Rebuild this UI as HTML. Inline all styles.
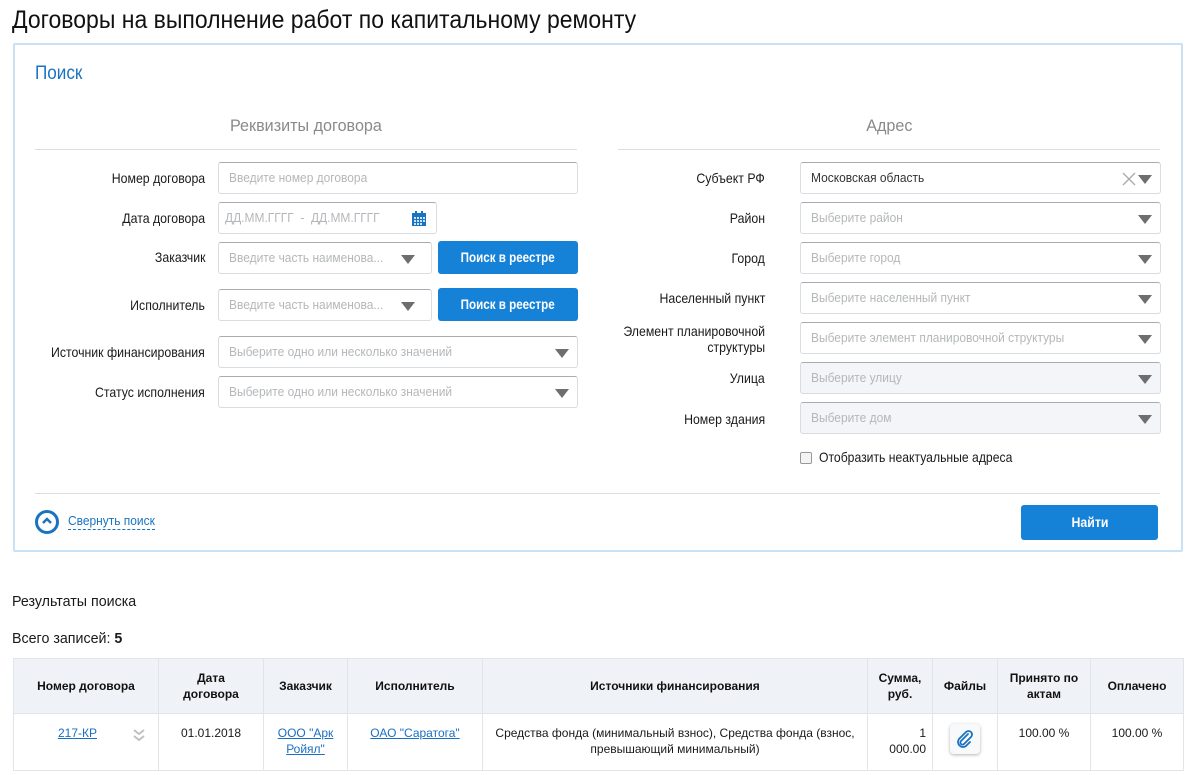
<!DOCTYPE html>
<html><head><meta charset="utf-8"><style>
*{box-sizing:border-box;margin:0;padding:0}
body{width:1192px;height:775px;overflow:hidden;background:#fff;font-family:"Liberation Sans",sans-serif;color:#1a1a1a;position:relative}
.a{position:absolute}
.s{display:inline-block;white-space:nowrap}
.lbl{position:absolute;font-size:14px;text-align:right;line-height:16px;transform:scaleX(.88);transform-origin:right center;white-space:nowrap}
.inp{position:absolute;height:32px;border:1px solid #d8dde2;border-top-color:#a9adb1;border-radius:3px;background:#fff;font-size:13px;color:#b4b7ba;padding-left:10px;line-height:30px;white-space:nowrap;overflow:hidden}
.inp .s{transform:scaleX(.92);transform-origin:left center}
.inp.dis{background:#f3f5f9}
.arr{position:absolute;right:8px;top:12px;width:0;height:0;border-left:7px solid transparent;border-right:7px solid transparent;border-top:9px solid #6c6e70}
.btn{position:absolute;background:#1582d8;color:#fff;border-radius:3px;font-size:14px;font-weight:bold;text-align:center}
table{position:absolute;left:13px;top:658px;border-collapse:collapse;font-family:"Liberation Sans",sans-serif;font-size:12px}
td,th{border:1px solid #e1e5ea;text-align:center;vertical-align:middle;padding:0 6px;line-height:16px}
th{background:#eff3f7;height:55px;font-weight:bold;color:#111}
td{vertical-align:top;padding-top:11px;height:57px}
a{color:#1a6fc0}
</style></head><body>
<div class="a" style="left:12px;top:5px;font-size:25px;line-height:30px;color:#111;transform:scaleX(.92);transform-origin:left center;white-space:nowrap">Договоры на выполнение работ по капитальному ремонту</div>
<div class="a" style="left:13px;top:43px;width:1170px;height:509px;border:2px solid #c8e1f5;border-radius:2px"></div>
<div class="a" style="left:35px;top:63px;font-size:19px;color:#1a73c0;transform:scaleX(.9);transform-origin:left center">Поиск</div>
<div class="a" style="left:35px;top:116px;width:542px;text-align:center;font-size:17px;color:#8a8a8a"><span class="s" style="transform:scaleX(.95)">Реквизиты договора</span></div>
<div class="a" style="left:35px;top:149px;width:542px;height:1px;background:#ddd"></div>
<div class="a" style="left:618px;top:116px;width:542px;text-align:center;font-size:17px;color:#8a8a8a"><span class="s" style="transform:scaleX(.95)">Адрес</span></div>
<div class="a" style="left:618px;top:149px;width:542px;height:1px;background:#ddd"></div>

<div class="lbl" style="right:987px;top:170px">Номер договора</div>
<div class="inp" style="left:218px;top:162px;width:360px"><span class="s">Введите номер договора</span></div>
<div class="lbl" style="right:987px;top:210px">Дата договора</div>
<div class="inp" style="left:218px;top:202px;width:219px;padding-left:6px"><span class="s">ДД.ММ.ГГГГ &nbsp;- &nbsp;ДД.ММ.ГГГГ</span>
<svg style="position:absolute;left:193px;top:8px" width="14" height="15" viewBox="0 0 14 15"><rect x="0" y="2" width="14" height="13" fill="#1a73c0"/><rect x="3" y="0" width="2" height="4" fill="#1a73c0"/><rect x="9" y="0" width="2" height="4" fill="#1a73c0"/><g fill="#cfe3f6"><rect x="2" y="6" width="2" height="2"/><rect x="5" y="6" width="2" height="2"/><rect x="8" y="6" width="2" height="2"/><rect x="11" y="6" width="2" height="2"/><rect x="2" y="9" width="2" height="2"/><rect x="5" y="9" width="2" height="2"/><rect x="8" y="9" width="2" height="2"/><rect x="11" y="9" width="2" height="2"/><rect x="2" y="12" width="2" height="2"/><rect x="5" y="12" width="2" height="2"/><rect x="8" y="12" width="2" height="2"/></g></svg></div>
<div class="lbl" style="right:987px;top:249px">Заказчик</div>
<div class="inp" style="left:218px;top:242px;width:214px"><span class="s">Введите часть наименова...</span><div class="arr" style="right:16px"></div></div>
<div class="btn" style="left:438px;top:241px;width:140px;height:33px;line-height:33px"><span class="s" style="transform:scaleX(.83)">Поиск в реестре</span></div>
<div class="lbl" style="right:987px;top:297px">Исполнитель</div>
<div class="inp" style="left:218px;top:289px;width:214px"><span class="s">Введите часть наименова...</span><div class="arr" style="right:16px"></div></div>
<div class="btn" style="left:438px;top:288px;width:140px;height:33px;line-height:33px"><span class="s" style="transform:scaleX(.83)">Поиск в реестре</span></div>
<div class="lbl" style="right:987px;top:344px">Источник финансирования</div>
<div class="inp" style="left:218px;top:336px;width:360px"><span class="s">Выберите одно или несколько значений</span><div class="arr"></div></div>
<div class="lbl" style="right:987px;top:384px">Статус исполнения</div>
<div class="inp" style="left:218px;top:376px;width:360px"><span class="s">Выберите одно или несколько значений</span><div class="arr"></div></div>

<div class="lbl" style="right:427px;top:170px">Субъект РФ</div>
<div class="inp" style="left:800px;top:162px;width:361px;color:#333"><span class="s">Московская область</span><svg style="position:absolute;right:24px;top:9px" width="14" height="14" viewBox="0 0 14 14"><path d="M1 1L13 13M13 1L1 13" stroke="#aaa" stroke-width="1.3"/></svg><div class="arr"></div></div>
<div class="lbl" style="right:427px;top:210px">Район</div>
<div class="inp" style="left:800px;top:202px;width:361px"><span class="s">Выберите район</span><div class="arr"></div></div>
<div class="lbl" style="right:427px;top:250px">Город</div>
<div class="inp" style="left:800px;top:242px;width:361px"><span class="s">Выберите город</span><div class="arr"></div></div>
<div class="lbl" style="right:427px;top:290px">Населенный пункт</div>
<div class="inp" style="left:800px;top:282px;width:361px"><span class="s">Выберите населенный пункт</span><div class="arr"></div></div>
<div class="lbl" style="right:427px;top:323px">Элемент планировочной<br>структуры</div>
<div class="inp" style="left:800px;top:322px;width:361px"><span class="s">Выберите элемент планировочной структуры</span><div class="arr"></div></div>
<div class="lbl" style="right:427px;top:370px">Улица</div>
<div class="inp dis" style="left:800px;top:362px;width:361px"><span class="s">Выберите улицу</span><div class="arr"></div></div>
<div class="lbl" style="right:427px;top:411px">Номер здания</div>
<div class="inp dis" style="left:800px;top:402px;width:361px"><span class="s">Выберите дом</span><div class="arr"></div></div>
<div class="a" style="left:800px;top:452px;width:12px;height:12px;border:1px solid #999;border-radius:2px;background:#f4f4f4"></div>
<div class="a" style="left:819px;top:449px;font-size:14px;transform:scaleX(.87);transform-origin:left center;white-space:nowrap">Отобразить неактуальные адреса</div>

<div class="a" style="left:35px;top:493px;width:1125px;height:1px;background:#ddd"></div>
<div class="a" style="left:35px;top:510px;width:24px;height:24px;border:3px solid #1a73c0;border-radius:50%"></div>
<svg class="a" style="left:41px;top:516px" width="12" height="10" viewBox="0 0 12 10"><path d="M2 7 L6 3 L10 7" stroke="#1a73c0" stroke-width="2.5" fill="none"/></svg>
<div class="a" style="left:68px;top:513px;font-size:13px;color:#1a73c0;border-bottom:1px dashed #1a73c0;line-height:16px;width:87px;white-space:nowrap"><span class="s" style="transform:scaleX(.92);transform-origin:left center">Свернуть поиск</span></div>
<div class="btn" style="left:1021px;top:505px;width:137px;height:35px;line-height:35px"><span class="s" style="transform:scaleX(.88)">Найти</span></div>

<div class="a" style="left:12px;top:593px;font-size:15px;transform:scaleX(.95);transform-origin:left center;white-space:nowrap">Результаты поиска</div>
<div class="a" style="left:12px;top:630px;font-size:15px;transform:scaleX(.95);transform-origin:left center;white-space:nowrap">Всего записей: <b>5</b></div>

<table>
<tr><th style="width:145px">Номер договора</th><th style="width:105px">Дата<br>договора</th><th style="width:84px">Заказчик</th><th style="width:135px">Исполнитель</th><th style="width:385px">Источники финансирования</th><th style="width:65px">Сумма,<br>руб.</th><th style="width:65px">Файлы</th><th style="width:93px">Принято по<br>актам</th><th style="width:93px">Оплачено</th></tr>
<tr><td style="position:relative"><a href="#" style="margin-left:-17px">217-КР</a><svg style="position:absolute;right:13px;top:14px" width="12" height="14" viewBox="0 0 12 14"><path d="M1 2L6 6L11 2M1 8L6 12L11 8" stroke="#c0c0c0" stroke-width="2" fill="none"/></svg></td><td>01.01.2018</td><td><a href="#">ООО "Арк<br>Ройял"</a></td><td><a href="#">ОАО "Саратога"</a></td><td>Средства фонда (минимальный взнос), Средства фонда (взнос, превышающий минимальный)</td><td style="text-align:right">1<br>000.00</td><td style="padding-top:10px"><div style="width:30px;height:30px;margin:0 auto;border-radius:4px;background:#f7f9fb;box-shadow:0 1px 3px rgba(0,0,0,.3);position:relative"><svg style="position:absolute;left:6px;top:6px" width="18" height="18" viewBox="0 0 18 18"><path d="M12 4 L5 11 A2 2 0 0 0 8 14 L15 7 A3.5 3.5 0 0 0 10 2 L3 9 A5 5 0 0 0 10 16 L14 12" stroke="#1a73c0" stroke-width="1.8" fill="none" stroke-linecap="round"/></svg></div></td><td>100.00 %</td><td>100.00 %</td></tr>
</table>
</body></html>
